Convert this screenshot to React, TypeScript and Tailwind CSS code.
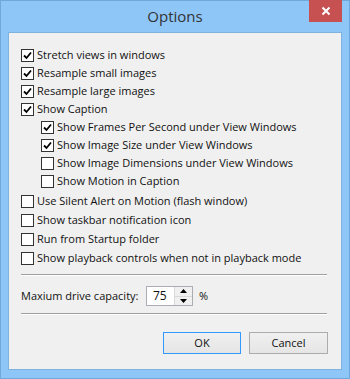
import { useState } from "react";

const groups = [
  [
    { label: "Stretch views in windows", checked: true, indent: false },
    { label: "Resample small images", checked: true, indent: false },
    { label: "Resample large images", checked: true, indent: false },
    { label: "Show Caption", checked: true, indent: false },
    { label: "Show Frames Per Second under View Windows", checked: true, indent: true },
    { label: "Show Image Size under View Windows", checked: true, indent: true },
    { label: "Show Image Dimensions under View Windows", checked: false, indent: true },
    { label: "Show Motion in Caption", checked: false, indent: true },
  ],
  [
    { label: "Use Silent Alert on Motion (flash window)", checked: false, indent: false },
    { label: "Show taskbar notification icon", checked: false, indent: false },
    { label: "Run from Startup folder", checked: false, indent: false },
    { label: "Show playback controls when not in playback mode", checked: false, indent: false },
  ],
];

function CheckBox({ checked }: { checked: boolean }) {
  return (
    <span className="flex h-[13px] w-[13px] shrink-0 items-center justify-center border border-[#333333] bg-white">
      {checked && (
        <svg width="9" height="9" viewBox="0 0 9 9">
          <path d="M1 4.5 L3.5 7 L8 1.5" fill="none" stroke="#000" strokeWidth="1.8" />
        </svg>
      )}
    </span>
  );
}

function Separator() {
  return <div className="mr-[1px] h-[2px] border-t border-b border-t-[#a0a0a0] border-b-white" />;
}

export default function App() {
  const [value] = useState(75);

  return (
    <div
      className="flex h-[379px] w-[350px] flex-col border border-[#6ea8dc] bg-[#8ec6f8] text-[11px] text-[#111111]"
      style={{ fontFamily: '"Segoe UI", "Open Sans", "Noto Sans", sans-serif' }}
    >
      <div className="relative flex h-[31px] shrink-0 items-center justify-center">
        <span className="text-[15px] text-[#333333]">Options</span>
        <button className="absolute -top-[1px] right-[7px] flex h-[22px] w-[33px] items-center justify-center bg-[#c75050]">
          <svg width="10" height="10" viewBox="0 0 10 10">
            <path d="M1.5 1.5 L8.5 8.5 M8.5 1.5 L1.5 8.5" stroke="#fff" strokeWidth="2" />
          </svg>
        </button>
      </div>

      <div className="mx-[7px] mb-[8px] flex flex-1 flex-col border border-[#7fb2de] bg-[#f0f0f0] pl-[12px] pr-[13px] pt-[13px]">
        <div className="flex flex-col">
          {groups[0].map((item) => (
            <label
              key={item.label}
              className={`flex h-[18px] items-center gap-[3px] whitespace-nowrap ${item.indent ? "pl-[20px]" : ""}`}
            >
              <CheckBox checked={item.checked} />
              {item.label}
            </label>
          ))}
        </div>
        <div className="mt-[2px] flex flex-col">
          {groups[1].map((item) => (
            <label key={item.label} className="flex h-[19px] items-center gap-[3px] whitespace-nowrap">
              <CheckBox checked={item.checked} />
              {item.label}
            </label>
          ))}
        </div>

        <div className="mt-[6px]">
          <Separator />
        </div>

        <div className="mt-[10px] flex h-[20px] items-center">
          <span className="w-[125px] shrink-0 whitespace-nowrap">Maxium drive capacity:</span>
          <div className="flex h-[20px] w-[47px] items-stretch border border-[#abadb3] bg-white">
            <span className="flex-1 pl-[6px] text-[12px] leading-[18px]">{value}</span>
            <div className="flex w-[18px] flex-col border-l border-[#d9d9d9] bg-[#f0f0f0]">
              <span className="flex flex-1 items-center justify-center border-b border-[#d9d9d9]">
                <svg width="7" height="4" viewBox="0 0 7 4">
                  <path d="M3.5 0 L7 4 L0 4 Z" fill="#000" />
                </svg>
              </span>
              <span className="flex flex-1 items-center justify-center">
                <svg width="7" height="4" viewBox="0 0 7 4">
                  <path d="M0 0 L7 0 L3.5 4 Z" fill="#000" />
                </svg>
              </span>
            </div>
          </div>
          <span className="ml-[6px]">%</span>
        </div>

        <div className="mt-[7px]">
          <Separator />
        </div>

        <div className="mt-[17px] flex justify-end gap-[8px]">
          <button className="h-[22px] w-[78px] border border-[#3399ff] bg-gradient-to-b from-[#f0f0f0] to-[#e5e5e5]">
            OK
          </button>
          <button className="h-[22px] w-[79px] border border-[#acacac] bg-gradient-to-b from-[#f0f0f0] to-[#e5e5e5]">
            Cancel
          </button>
        </div>
      </div>
    </div>
  );
}
